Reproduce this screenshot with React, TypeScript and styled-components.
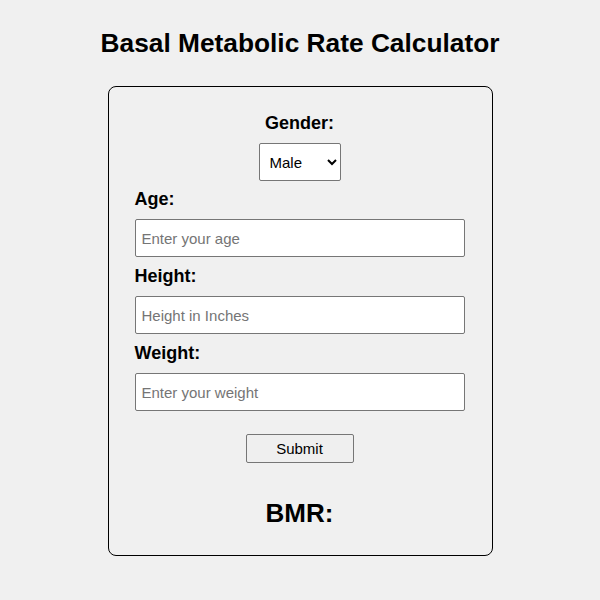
import React from "react";
import styled, { createGlobalStyle } from "styled-components";

const Global = createGlobalStyle`
  html, body { margin: 0; padding: 0; background: #f0f0f0; }
  body { font-family: "Liberation Sans", Arial, sans-serif; color: #000; }
`;

const Page = styled.div`
  display: flex;
  flex-direction: column;
  align-items: center;
  padding-top: 28px;
`;

const Title = styled.h1`
  margin: 0 0 28px;
  font-size: 26.3px;
  line-height: 30px;
  font-weight: 700;
  text-align: center;
`;

const Card = styled.form`
  box-sizing: border-box;
  width: 385px;
  border: 1px solid #000;
  border-radius: 8px;
  padding: 25px 27px 27px 26px;
  display: flex;
  flex-direction: column;
`;

const Label = styled.label<{ $center?: boolean }>`
  display: block;
  font-size: 18px;
  line-height: 22px;
  font-weight: 700;
  margin-bottom: 9px;
  text-align: ${(p) => (p.$center ? "center" : "left")};
`;

const SelectRow = styled.div`
  display: flex;
  justify-content: center;
  margin-bottom: 7px;
`;

const Select = styled.select`
  box-sizing: border-box;
  width: 82px;
  height: 38px;
  padding: 0 4px 0 6px;
  font-family: "Liberation Sans", Arial, sans-serif;
  font-size: 15px;
  color: #000;
  background: #fff;
  border: 1px solid #767676;
  border-radius: 2px;
`;

const Input = styled.input`
  box-sizing: border-box;
  width: 100%;
  height: 38px;
  padding: 0 6px;
  font-family: "Liberation Sans", Arial, sans-serif;
  font-size: 15px;
  background: #fff;
  border: 1px solid #767676;
  border-radius: 2px;
  margin-bottom: 8px;
  &::placeholder { color: #757575; }
`;

const ButtonRow = styled.div`
  display: flex;
  justify-content: center;
  margin-top: 15px;
`;

const Button = styled.button`
  box-sizing: border-box;
  width: 108px;
  height: 29px;
  font-family: "Liberation Sans", Arial, sans-serif;
  font-size: 15px;
  color: #000;
  background: #efefef;
  border: 1px solid #767676;
  border-radius: 2px;
`;

const Result = styled.h2`
  margin: 35px 0 0;
  font-size: 26px;
  line-height: 30px;
  font-weight: 700;
  text-align: center;
`;

export default function App() {
  return (
    <>
      <Global />
      <Page>
        <Title>Basal Metabolic Rate Calculator</Title>
        <Card onSubmit={(e) => e.preventDefault()}>
          <Label $center>Gender:</Label>
          <SelectRow>
            <Select defaultValue="male">
              <option value="male">Male</option>
              <option value="female">Female</option>
            </Select>
          </SelectRow>
          <Label>Age:</Label>
          <Input placeholder="Enter your age" />
          <Label>Height:</Label>
          <Input placeholder="Height in Inches" />
          <Label>Weight:</Label>
          <Input placeholder="Enter your weight" />
          <ButtonRow>
            <Button type="submit">Submit</Button>
          </ButtonRow>
          <Result>BMR:</Result>
        </Card>
      </Page>
    </>
  );
}
